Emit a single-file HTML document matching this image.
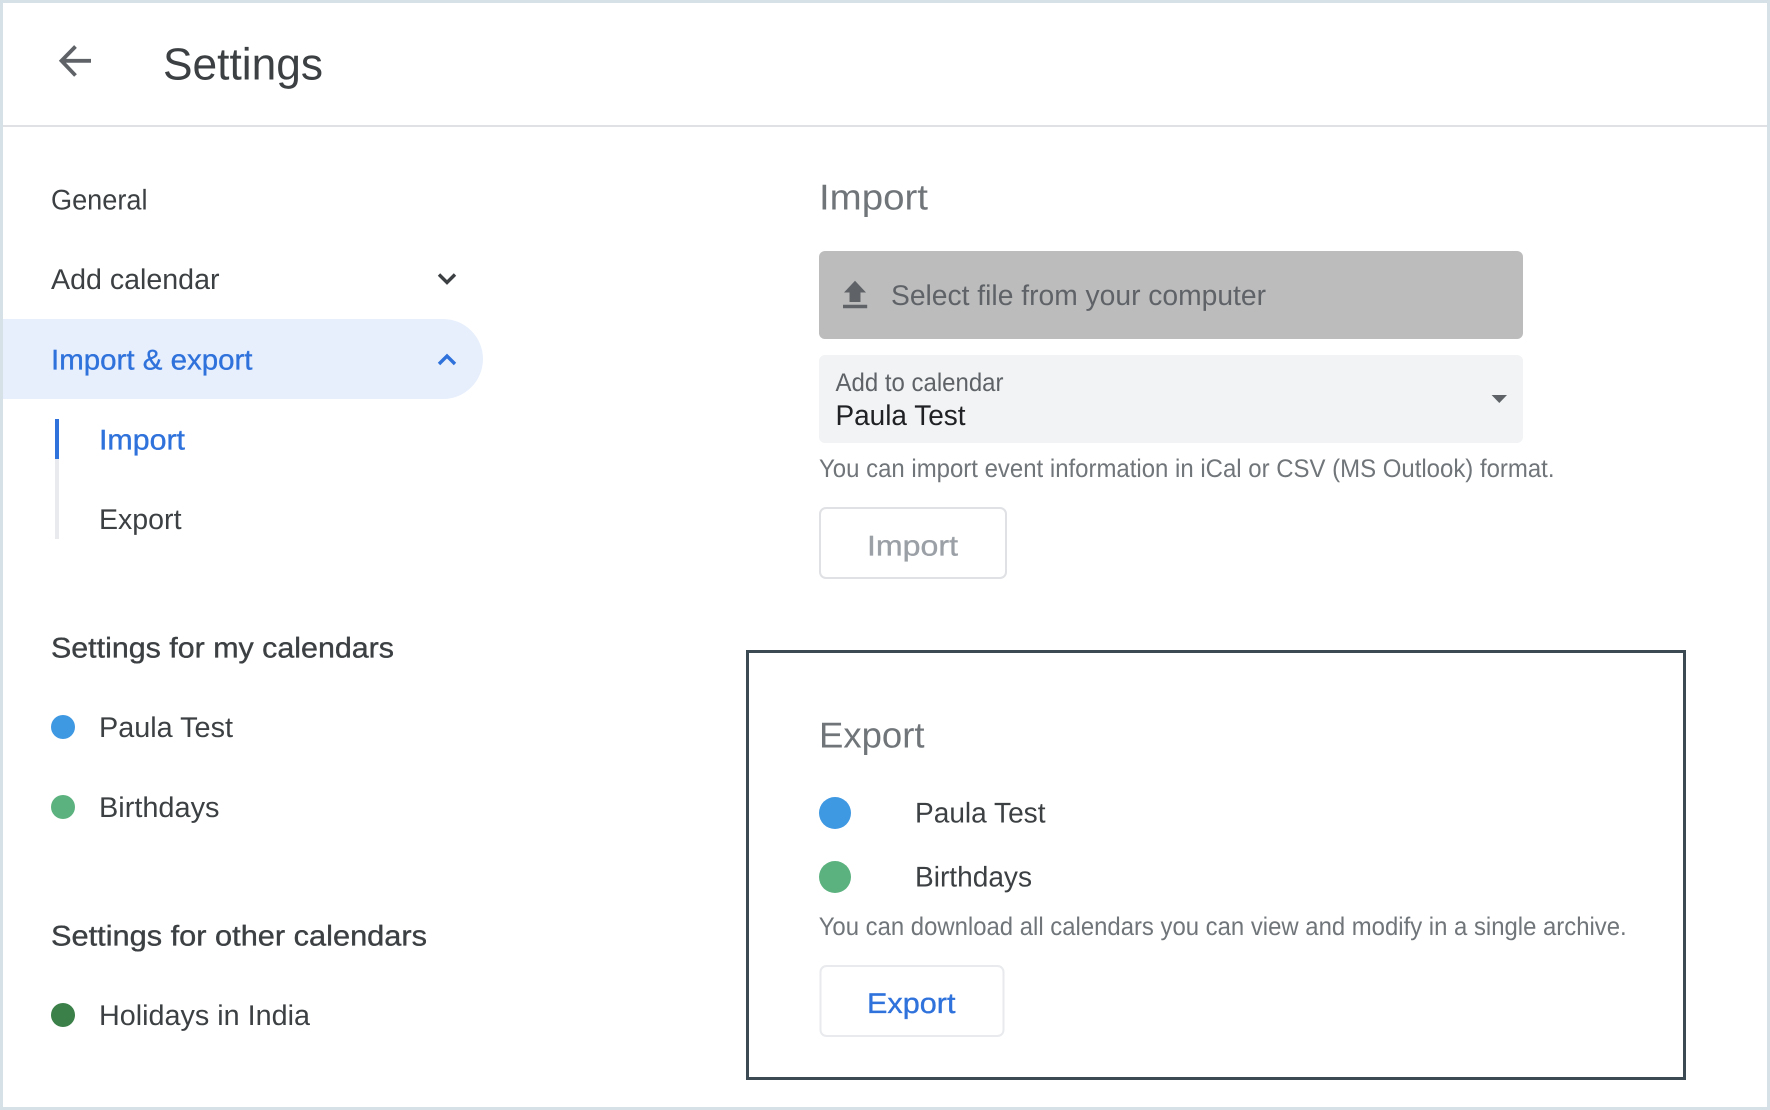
<!DOCTYPE html>
<html lang="en"><head><meta charset="utf-8"><title>Settings</title>
<style>
html,body{margin:0;padding:0;background:#fff;width:1770px;height:1110px;overflow:hidden}
svg{display:block}
text{font-family:"Liberation Sans",Arial,sans-serif;font-size:28.5px;fill:#3c4043;text-rendering:geometricPrecision}
.m{stroke-width:.35px;paint-order:stroke}
.b{fill:#2f72dc;stroke:#2f72dc}
.h{font-size:36px;fill:#70757a}
.s{font-size:25.5px;fill:#70757a}
</style></head><body>
<svg width="1770" height="1110" viewBox="0 0 1770 1110" xmlns="http://www.w3.org/2000/svg">
<rect x="1.5" y="1.5" width="1767" height="1107" fill="#fff" stroke="#d6e0e7" stroke-width="3"/>
<rect x="3" y="125" width="1764" height="2" fill="#dfe1e4"/>
<path d="M91 60.8H62M75.5 46.5L61.5 60.8L75.5 75.5" fill="none" stroke="#5f6368" stroke-width="3.8"/>
<text x="163" y="79.3" style="font-size:45px" textLength="160" lengthAdjust="spacingAndGlyphs">Settings</text>

<text x="51" y="209.3" textLength="96.5" lengthAdjust="spacingAndGlyphs">General</text>
<text x="51" y="289.1" textLength="168.5" lengthAdjust="spacingAndGlyphs">Add calendar</text>
<path d="M439 274.5L447 282.5L455 274.5" fill="none" stroke="#3c4043" stroke-width="3.4"/>
<path d="M3 319H443a40 40 0 0 1 0 80H3Z" fill="#e7effc"/>
<text class="m b" x="51" y="369.5" textLength="201.5" lengthAdjust="spacingAndGlyphs">Import &amp; export</text>
<path d="M439 364L447 356L455 364" fill="none" stroke="#2f72dc" stroke-width="3.4"/>
<rect x="55" y="459" width="4" height="80" fill="#e8eaed"/>
<rect x="55" y="419" width="4" height="40" fill="#2f72dc"/>
<text class="m b" x="99" y="449.5" textLength="86" lengthAdjust="spacingAndGlyphs">Import</text>
<text x="99" y="529.1" textLength="82.5" lengthAdjust="spacingAndGlyphs">Export</text>

<text class="m" stroke="#3c4043" x="51" y="657.3" textLength="343" lengthAdjust="spacingAndGlyphs">Settings for my calendars</text>
<circle cx="63" cy="727" r="12" fill="#3f98e2"/>
<text x="99" y="737.2" textLength="134" lengthAdjust="spacingAndGlyphs">Paula Test</text>
<circle cx="63" cy="807" r="12" fill="#5cb27f"/>
<text x="99" y="817.2" textLength="120.5" lengthAdjust="spacingAndGlyphs">Birthdays</text>
<text class="m" stroke="#3c4043" x="51" y="945.3" textLength="376" lengthAdjust="spacingAndGlyphs">Settings for other calendars</text>
<circle cx="63" cy="1015" r="12" fill="#3b8049"/>
<text x="99" y="1024.8" textLength="211" lengthAdjust="spacingAndGlyphs">Holidays in India</text>

<text class="h" x="819" y="209.5" textLength="109" lengthAdjust="spacingAndGlyphs">Import</text>
<rect x="819" y="251" width="704" height="88" rx="6" fill="#bcbcbc"/>
<path d="M855 280.7L866 292.5H860.5V302H849.5V292.5H844ZM843 304.8H867.2V308.3H843Z" fill="#5f6368"/>
<text x="891" y="305" style="fill:#5f6368" textLength="375" lengthAdjust="spacingAndGlyphs">Select file from your computer</text>
<rect x="819" y="355" width="704" height="88" rx="6" fill="#f1f3f4"/>
<text x="835.5" y="391" style="font-size:25.5px;fill:#5f6368" textLength="168" lengthAdjust="spacingAndGlyphs">Add to calendar</text>
<text x="835.5" y="425" style="fill:#202124" textLength="130" lengthAdjust="spacingAndGlyphs">Paula Test</text>
<path d="M1491.6 395H1507L1499.3 403Z" fill="#5f6368"/>
<text class="s" x="819" y="477" textLength="735.5" lengthAdjust="spacingAndGlyphs">You can import event information in iCal or CSV (MS Outlook) format.</text>
<rect x="820" y="508" width="186" height="70" rx="6" fill="#fff" stroke="#dfe1e4" stroke-width="2"/>
<text class="m" stroke="#9aa0a6" style="fill:#9aa0a6" x="867" y="555.5" textLength="91" lengthAdjust="spacingAndGlyphs">Import</text>

<rect x="747.5" y="651.5" width="937" height="427" fill="none" stroke="#3c4a53" stroke-width="3"/>
<text class="h" x="819" y="747.4" textLength="105.5" lengthAdjust="spacingAndGlyphs">Export</text>
<circle cx="835" cy="813" r="16" fill="#3f98e2"/>
<text x="915" y="822.7" textLength="130.5" lengthAdjust="spacingAndGlyphs">Paula Test</text>
<circle cx="835" cy="877" r="16" fill="#5cb27f"/>
<text x="915" y="886.7" textLength="117" lengthAdjust="spacingAndGlyphs">Birthdays</text>
<text class="s" x="818.7" y="935" textLength="808" lengthAdjust="spacingAndGlyphs">You can download all calendars you can view and modify in a single archive.</text>
<rect x="820.5" y="966" width="183" height="70" rx="6" fill="#fff" stroke="#e8eaed" stroke-width="2"/>
<text class="m b" x="867" y="1012.8" textLength="88.5" lengthAdjust="spacingAndGlyphs">Export</text>
</svg>
</body></html>
